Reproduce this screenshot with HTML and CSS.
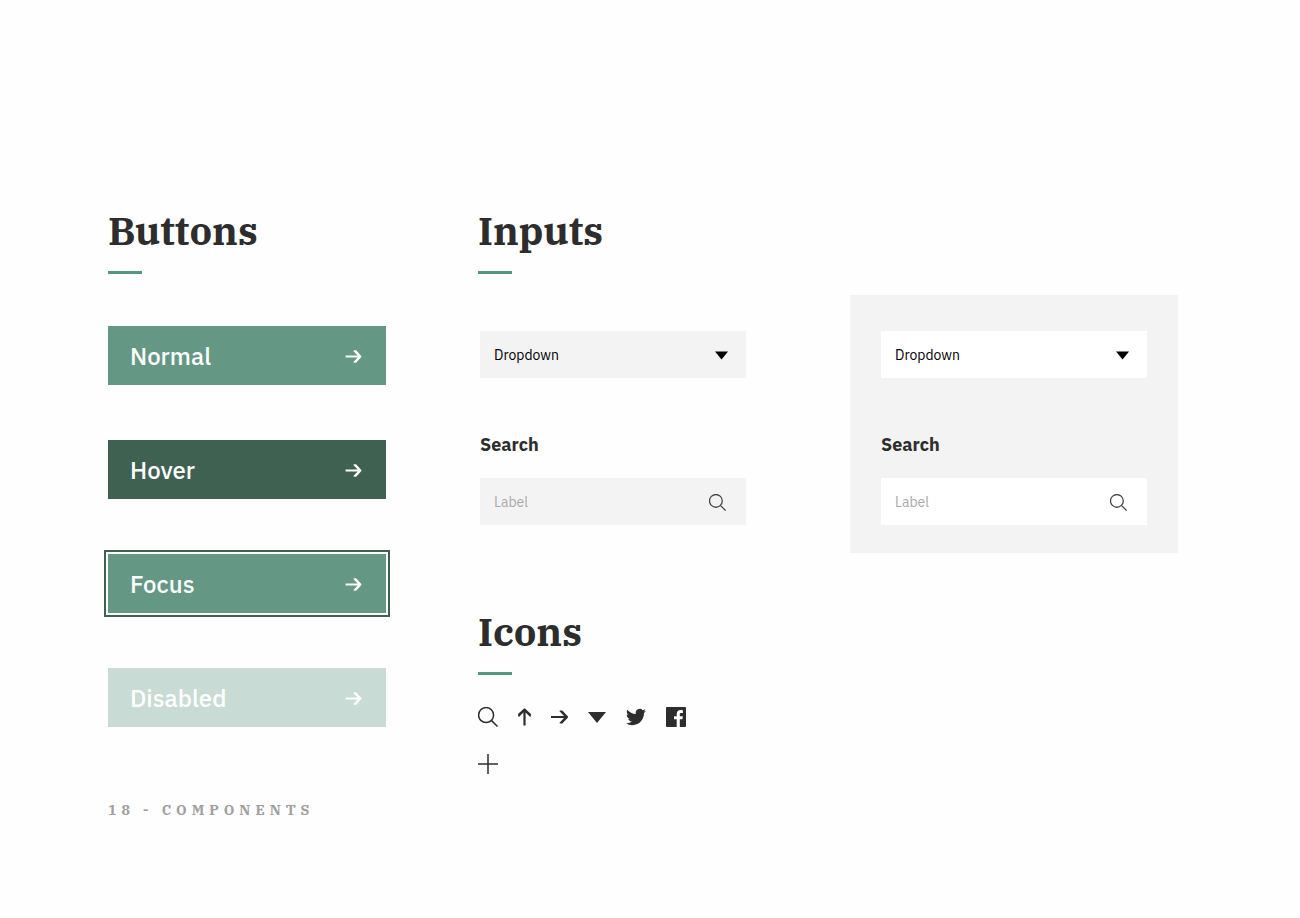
FILE: index.html
```html
<!DOCTYPE html>
<html lang="en">
<head>
<meta charset="utf-8">
<meta name="viewport" content="width=device-width, initial-scale=1">
<title>Components</title>
<link rel="stylesheet" href="styles.css">
</head>
<body>
<svg class="sprite" aria-hidden="true">
  <symbol id="search" viewBox="0 0 20 20"><path d="M13.400 13.400l6.100 6.100M15.600 8.100a7.500 7.500 0 1 1-15 0a7.500 7.500 0 0 1 15 0z" fill="none" stroke="currentColor" stroke-width="1.500"/></symbol>
  <symbol id="arrow" viewBox="0 0 17 14"><path d="M0 6h13L8.300 1.100 9.300.4h2L17 6.500v1L11.300 13.600h-2L8.300 12.900 13 8H0z" fill="currentColor"/></symbol>
  <symbol id="triangle" viewBox="0 0 18 11"><path d="M0 0h18L9 11z" fill="currentColor"/></symbol>
</svg>
<main class="page">
  <div class="columns">
    <section class="column">
      <h2 class="title">Buttons</h2>
      <div class="buttons">
        <button class="button" type="button">Normal <svg class="button-icon" aria-hidden="true"><use href="#arrow"/></svg></button>
        <button class="button button-hover" type="button">Hover <svg class="button-icon" aria-hidden="true"><use href="#arrow"/></svg></button>
        <button class="button button-focus" type="button">Focus <svg class="button-icon" aria-hidden="true"><use href="#arrow"/></svg></button>
        <button class="button button-disabled" type="button" disabled>Disabled <svg class="button-icon" aria-hidden="true"><use href="#arrow"/></svg></button>
      </div>
    </section>
    <section class="column">
      <h2 class="title">Inputs</h2>
      <div class="fields">
        <div class="control">
          <select class="input" aria-label="Dropdown"><option>Dropdown</option></select>
          <svg class="select-icon" aria-hidden="true"><use href="#triangle"/></svg>
        </div>
        <label class="label" for="search-light">Search</label>
        <div class="control">
          <input class="input" id="search-light" type="search" placeholder="Label">
          <svg class="search-icon" aria-hidden="true"><use href="#search"/></svg>
        </div>
      </div>
      <h2 class="title">Icons</h2>
      <div class="icons">
        <svg width="20" height="20"><use href="#search"/></svg>
        <svg width="13" height="18" viewBox="0 0 13 18"><path d="M5.400 17.500V4.500L.9 9 .1 8V6L6 .5h1L12.900 6v2l-.8 1-4.500-4.500v13z" fill="currentColor"/></svg>
        <svg width="17" height="14"><use href="#arrow"/></svg>
        <svg width="18" height="11"><use href="#triangle"/></svg>
        <svg width="20" height="20" viewBox="0 0 24 24"><path d="M23.950 4.570a10 10 0 0 1-2.820.770 4.960 4.960 0 0 0 2.160-2.720c-.950.550-2 .950-3.130 1.180a4.920 4.920 0 0 0-8.380 4.480C7.690 8.090 4.070 6.130 1.640 3.160a4.820 4.820 0 0 0-.670 2.480c0 1.710.870 3.210 2.190 4.100a4.900 4.900 0 0 1-2.230-.620v.060a4.920 4.920 0 0 0 3.950 4.830 5 5 0 0 1-2.210.080 4.940 4.940 0 0 0 4.600 3.420A9.870 9.870 0 0 1 0 19.540a14 14 0 0 0 7.550 2.210c9.050 0 14-7.500 14-13.980 0-.210 0-.420-.020-.630a9.940 9.940 0 0 0 2.460-2.550z" fill="currentColor"/></svg>
        <svg width="20" height="20" viewBox="0 0 20 20"><path d="M1 0h18a1 1 0 0 1 1 1v18a1 1 0 0 1-1 1h-5.200v-7.700h2.600l.4-3h-3V7.400c0-.9.200-1.500 1.500-1.500h1.600V3.200a21 21 0 0 0-2.300-.1c-2.300 0-3.900 1.400-3.900 4v2.200H8v3h2.700V20H1a1 1 0 0 1-1-1V1a1 1 0 0 1 1-1z" fill="currentColor"/></svg>
        <svg width="20" height="20" viewBox="0 0 20 20"><path d="M10 0v20M0 10h20" stroke="currentColor" stroke-width="1.500"/></svg>
      </div>
    </section>
    <section class="panel">
      <div class="control">
        <select class="input input-white" aria-label="Dropdown"><option>Dropdown</option></select>
        <svg class="select-icon" aria-hidden="true"><use href="#triangle"/></svg>
      </div>
      <label class="label" for="search-panel">Search</label>
      <div class="control">
        <input class="input input-white" id="search-panel" type="search" placeholder="Label">
        <svg class="search-icon" aria-hidden="true"><use href="#search"/></svg>
      </div>
    </section>
  </div>
  <footer class="footer">18 - COMPONENTS</footer>
</main>
</body>
</html>
```
FILE: styles.css
```css
* {
  box-sizing: border-box;
}

body {
  margin: 0;
  background: #fefefe;
  color: #2d2d2d;
  font-family: "IBM Plex Sans", Roboto, sans-serif;
}

.sprite {
  display: none;
}

.page {
  padding: 206px 122px 80px 108px;
}

.columns {
  display: grid;
  grid-template-columns: 278fr 280fr 328fr;
  align-items: start;
  gap: 92px;
}

.title {
  margin: 0;
  font-family: "IBM Plex Serif", "DejaVu Serif Condensed", "DejaVu Serif", serif;
  font-size: 39px;
  font-weight: 700;
  line-height: 50px;
}

.title::after {
  content: "";
  display: block;
  width: 34px;
  height: 3px;
  margin-top: 15px;
  background: #559882;
}

.buttons {
  display: grid;
  gap: 55px;
  margin-top: 52px;
}

.button {
  display: flex;
  align-items: center;
  justify-content: space-between;
  height: 59px;
  padding: 0 24px 0 22px;
  border: 0;
  background: #649784;
  color: #fff;
  font-family: inherit;
  font-size: 24px;
  font-weight: 500;
}

.button-hover {
  background: #3f6152;
}

.button-focus {
  outline: 2px solid #3f6152;
  outline-offset: 2px;
}

.button-disabled {
  background: #c8dbd4;
}

.button-icon {
  width: 17px;
  height: 13px;
  margin-top: 1px;
}

.fields {
  margin: 57px 12px 82px 2px;
}

.control {
  position: relative;
}

.input {
  display: block;
  width: 100%;
  height: 47px;
  padding: 0 48px 0 14px;
  border: 0;
  border-radius: 0;
  appearance: none;
  background: #f3f3f3;
  color: #000;
  font-family: inherit;
  font-size: 14px;
}

.input-white {
  background: #fff;
}

.input::placeholder {
  color: #aaa;
}

.select-icon,
.search-icon {
  position: absolute;
  pointer-events: none;
}

.select-icon {
  top: 20px;
  right: 18px;
  width: 13px;
  height: 9px;
  color: #000;
}

.search-icon {
  top: 16px;
  right: 20px;
  width: 17px;
  height: 17px;
  color: #444;
}

.label {
  display: block;
  margin: 55px 0 21px;
  font-size: 18px;
  font-weight: 700;
  line-height: 24px;
}

.icons {
  display: flex;
  flex-wrap: wrap;
  align-items: center;
  gap: 27px 20px;
  max-width: 220px;
  margin-top: 32px;
}

.panel {
  margin-top: 89px;
  padding: 36px 31px 28px;
  background: #f3f3f3;
}

.footer {
  margin-top: 26px;
  color: #a0a0a0;
  font-family: "IBM Plex Serif", "DejaVu Serif Condensed", "DejaVu Serif", serif;
  font-size: 14px;
  font-weight: 700;
  line-height: 20px;
  letter-spacing: 5px;
}
```
